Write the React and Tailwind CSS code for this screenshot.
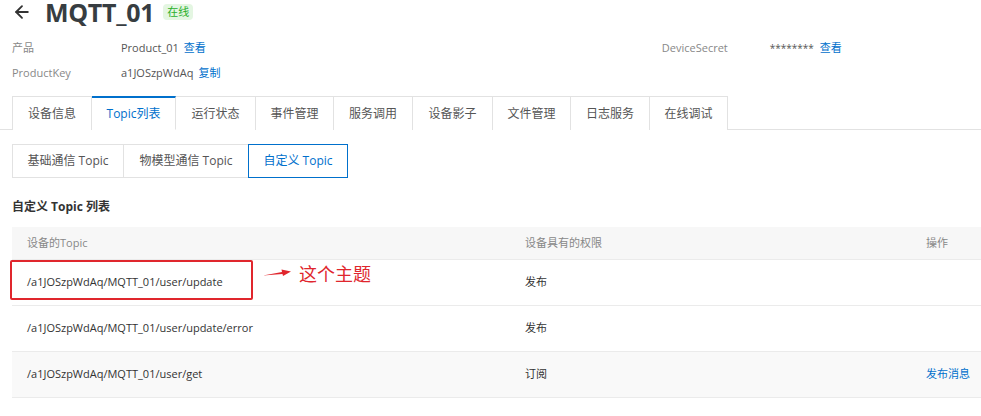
import { ArrowLeft } from 'lucide-react';

const tabs = ['设备信息', 'Topic列表', '运行状态', '事件管理', '服务调用', '设备影子', '文件管理', '日志服务', '在线调试'];
const tabWidths = ['w-[80px]', 'w-[84px]', 'w-[80px]', 'w-[78px]', 'w-[79px]', 'w-[80px]', 'w-[78px]', 'w-[79px]', 'w-[78px]'];

const rows = [
  { topic: '/a1JOSzpWdAq/MQTT_01/user/update', perm: '发布', op: '', marked: true },
  { topic: '/a1JOSzpWdAq/MQTT_01/user/update/error', perm: '发布', op: '' },
  { topic: '/a1JOSzpWdAq/MQTT_01/user/get', perm: '订阅', op: '发布消息', hover: true },
];

export default function App() {
  return (
    <div className="w-[981px] h-[416px] overflow-hidden bg-white text-[#333] font-['Open_Sans','Noto_Sans_CJK_SC',sans-serif] text-[12px]">
      {/* header */}
      <div className="flex items-center h-[26px] -mt-[1px] pl-[12px]">
        <ArrowLeft size={20} strokeWidth={2.2} className="text-[#333]" />
        <span className="ml-[13px] text-[25px] font-bold leading-[26px] tracking-[-0.3px] text-[#373d41]">MQTT_01</span>
        <span className="ml-[9px] px-[4px] h-[16px] leading-[16px] bg-[#e4f6e2] text-[#2bb02b] text-[11px] rounded-sm">在线</span>
      </div>

      <div className="mt-[16px] pl-[12px] flex flex-col gap-[11px] text-[11px]">
        <div className="flex h-[14px] items-center">
          <span className="w-[109px] text-[#888]">产品</span>
          <span className="text-[#555]">Product_01</span>
          <span className="ml-[5px] text-[#0070cc]">查看</span>
          <span className="ml-[456px] w-[108px] text-[#888]">DeviceSecret</span>
          <span className="text-[#555] text-[10px]">********</span>
          <span className="ml-[6px] text-[#0070cc]">查看</span>
        </div>
        <div className="flex h-[14px] items-center">
          <span className="w-[109px] text-[#888]">ProductKey</span>
          <span className="text-[#555]">a1JOSzpWdAq</span>
          <span className="ml-[5px] text-[#0070cc]">复制</span>
        </div>
      </div>

      {/* tabs */}
      <div className="mt-[16px] pl-[12px] flex border-b border-[#e2e2e2] h-[34px]">
        {tabs.map((t, i) => (
          <div
            key={t}
            className={
              'flex items-center justify-center border-t border-r -mb-px text-[12px] ' +
              tabWidths[i] +
              (i === 0 ? ' border-l' : '') +
              (i === 1
                ? ' border-t-2 border-t-[#0070cc] border-r-[#e2e2e2] bg-white text-[#0070cc] border-b border-b-white'
                : ' border-[#e2e2e2] bg-white text-[#555]')
            }
          >
            {t}
          </div>
        ))}
      </div>

      {/* sub tabs */}
      <div className="mt-[14px] pl-[12px] flex h-[34px]">
        <div className="w-[112px] flex items-center justify-center border border-[#e2e2e2] text-[#555]">基础通信 Topic</div>
        <div className="w-[125px] flex items-center justify-center border-y border-r border-[#e2e2e2] text-[#555]">物模型通信 Topic</div>
        <div className="w-[100px] flex items-center justify-center border border-[#0070cc] -ml-px text-[#0070cc]">自定义 Topic</div>
      </div>

      <div className="mt-[20px] pl-[12px] font-bold text-[12px] text-[#333]">自定义 Topic 列表</div>

      {/* table */}
      <div className="mt-[11px] ml-[12px] w-[990px]">
        <div className="flex h-[33px] items-center bg-[#f7f7f7] border-b border-[#ebebeb] text-[#888] text-[11px]">
          <div className="w-[498px] pl-[15px]">设备的Topic</div>
          <div className="w-[400px] pl-[15px]">设备具有的权限</div>
          <div className="flex-1 pl-[16px]">操作</div>
        </div>
        {rows.map((r) => (
          <div
            key={r.topic}
            className={'relative flex h-[46px] items-center border-b border-[#ebebeb] text-[11px] text-[#333] ' + (r.hover ? 'bg-[#f9f9f9]' : 'bg-white')}
          >
            <div className="w-[498px] pl-[15px]">{r.topic}</div>
            <div className="w-[400px] pl-[15px]">{r.perm}</div>
            <div className="flex-1 pl-[16px] text-[#0070cc]">{r.op}</div>
            {r.marked && (
              <div className="absolute -left-[2px] top-0 w-[243px] h-[40px] border-2 border-[#e0262d] rounded-[2px] pointer-events-none" />
            )}
            {r.marked && (
              <div className="absolute left-[250px] top-[1px] flex items-center gap-[7px]">
                <svg width="30" height="10" viewBox="0 0 30 10">
                  <path d="M1 7.5 L20 4 L19.5 1.5 L29 3.5 L21 8 L20.5 6 Z" fill="#e0262d" />
                </svg>
                <span className="text-[18px] leading-[24px] text-[#e0262d] font-['Noto_Sans_CJK_SC',sans-serif]">这个主题</span>
              </div>
            )}
          </div>
        ))}
      </div>
    </div>
  );
}
